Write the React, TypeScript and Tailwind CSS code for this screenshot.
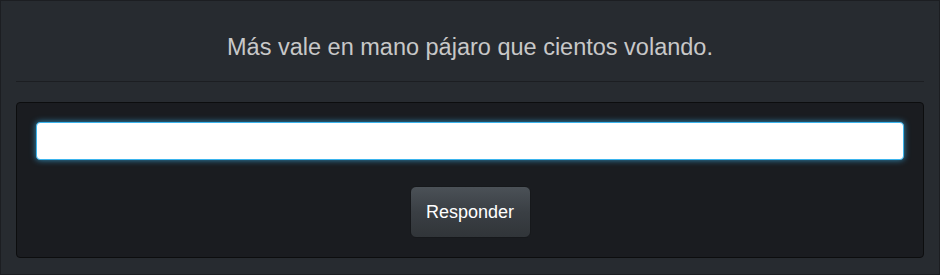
export default function App() {
  return (
    <div className="h-[275px] w-[940px] border border-[#1c1e22] bg-[#272b30] px-[15px] font-['Liberation_Sans',Arial,sans-serif]">
      <div className="flex h-[81px] items-center justify-center border-b border-[#1c1e22] pt-[14px]">
        <h2 className="text-[23.5px] leading-none text-[#c8c8c8]">Más vale en mano pájaro que cientos volando.</h2>
      </div>
      <div className="mt-[20px] flex flex-col items-center gap-[26px] rounded-[4px] border border-[#0c0d0e] bg-[#1a1c20] p-[19px]">
        <input
          type="text"
          className="h-[38px] w-full rounded-[4px] border border-[#3bb4ed] bg-white px-3 text-[14px] text-[#272b30] shadow-[0_0_6px_rgba(59,180,237,0.75)] outline-none"
        />
        <button className="h-[52px] w-[121px] rounded-[6px] border border-[#16181b] bg-gradient-to-b from-[#4b5157] via-[#3a3f44] to-[#313539] text-[18px] text-white">
          Responder
        </button>
      </div>
    </div>
  )
}
